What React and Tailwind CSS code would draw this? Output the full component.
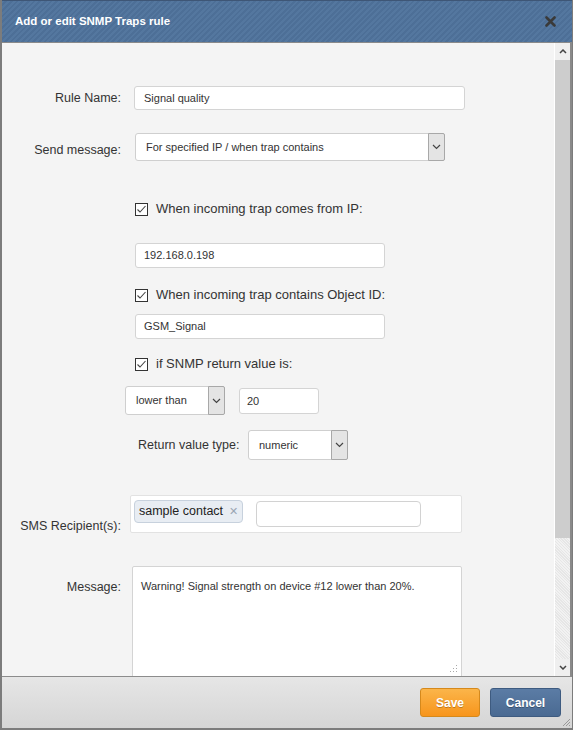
import React from "react";

const font = { fontFamily: '"Liberation Sans", Arial, Helvetica, sans-serif' };

function Chevron({ className = "" }) {
  return (
    <svg width="9" height="6" viewBox="0 0 9 6" className={className}>
      <path d="M1 1 L4.5 4.5 L8 1" fill="none" stroke="#444" strokeWidth="1.2" />
    </svg>
  );
}

function Select({ value, className }) {
  return (
    <div className={`flex bg-white border border-[#cfcfcf] rounded-[3px] ${className}`}>
      <div className="flex-1 flex items-center pl-[10px] text-[11px] text-[#333]">{value}</div>
      <div className="w-[17px] flex items-center justify-center bg-[#e4e4e4] border border-[#a8a8a8] rounded-r-[2px] -my-px -mr-px">
        <Chevron />
      </div>
    </div>
  );
}

function Check({ label, className }) {
  return (
    <div className={`flex items-center h-[16px] ml-[133px] ${className}`}>
      <div className="w-[13px] h-[13px] border border-[#333] bg-white flex items-center justify-center">
        <svg width="11" height="9" viewBox="0 0 11 9">
          <path d="M1.5 4.5 L4 7 L9.5 1" fill="none" stroke="#444" strokeWidth="1.1" />
        </svg>
      </div>
      <span className="ml-[8px] text-[13px] text-[#333]">{label}</span>
    </div>
  );
}

export default function App() {
  return (
    <div style={font} className="w-[573px] h-[730px] flex flex-col bg-[#f4f4f4] border-l-2 border-b-2 border-r border-[#7c7c7c] overflow-hidden">
      {/* Header */}
      <div className="h-[43px] shrink-0 flex items-center justify-between border-t border-[#3e5676] border-b border-b-[#8a8a8a] bg-[repeating-linear-gradient(135deg,#54779f_0px,#54779f_2px,#4d6f97_2px,#4d6f97_4px)] pl-[13px] pr-[16px]">
        <span className="text-white font-bold text-[11.5px]">Add or edit SNMP Traps rule</span>
        <svg width="11" height="11" viewBox="0 0 11 11">
          <path d="M1.5 1.5 L9.5 9.5 M9.5 1.5 L1.5 9.5" stroke="#3a3a3a" strokeWidth="2.6" strokeLinecap="round" />
        </svg>
      </div>

      {/* Body */}
      <div className="flex-1 flex min-h-0 border-r-2 border-[#8a8a8a]">
        <div className="flex-1 overflow-hidden border-r border-white">
          {/* Rule name */}
          <div className="mt-[43px] flex items-center h-[24px]">
            <div className="w-[119px] text-right text-[12.5px] text-[#333]">Rule Name:</div>
            <div className="ml-[13px] w-[331px] h-[24px] bg-white border border-[#d4d4d4] rounded-[3px] flex items-center pl-[9px] text-[11px] text-[#333]">Signal quality</div>
          </div>
          {/* Send message */}
          <div className="mt-[23px] flex items-center h-[28px]">
            <div className="w-[119px] text-right text-[12.5px] text-[#333] pt-[6px]">Send message:</div>
            <Select value="For specified IP / when trap contains" className="ml-[14px] w-[310px] h-[28px]" />
          </div>
          {/* Checkboxes and inputs */}
          <Check label="When incoming trap comes from IP:" className="mt-[40px]" />
          <div className="mt-[26px] ml-[133px] w-[250px] h-[25px] bg-white border border-[#d4d4d4] rounded-[3px] flex items-center pl-[8px] text-[11px] text-[#333]">192.168.0.198</div>
          <Check label="When incoming trap contains Object ID:" className="mt-[19px]" />
          <div className="mt-[11px] ml-[133px] w-[250px] h-[25px] bg-white border border-[#d4d4d4] rounded-[3px] flex items-center pl-[8px] text-[11px] text-[#333]">GSM_Signal</div>
          <Check label="if SNMP return value is:" className="mt-[17px]" />
          {/* lower than row */}
          <div className="mt-[14px] flex items-center h-[29px]">
            <Select value="lower than" className="ml-[123px] w-[100px] h-[29px]" />
            <div className="ml-[14px] w-[80px] h-[26px] bg-white border border-[#d4d4d4] rounded-[3px] flex items-center pl-[7px] pt-[2px] text-[11px] text-[#333]">20</div>
          </div>
          {/* Return value type */}
          <div className="mt-[15px] flex items-center h-[30px]">
            <span className="ml-[136px] text-[12.5px] text-[#333] w-[97px] whitespace-nowrap">Return value type:</span>
            <Select value="numeric" className="ml-[13px] w-[100px] h-[30px] bg-[#fbfbfb]" />
          </div>
          {/* SMS recipients */}
          <div className="mt-[35px] flex items-end">
            <div className="w-[119px] text-right text-[12.5px] text-[#333] translate-y-[3px]">SMS Recipient(s):</div>
            <div className="ml-[9px] w-[332px] h-[38px] bg-white border border-[#e2e2e2] rounded-[2px] flex items-start pt-[4px] pl-[3px]">
              <div className="h-[23px] px-[4px] flex items-center bg-[#e8edf3] border border-[#c7d1dd] rounded-[4px] text-[12.5px] text-[#222]">
                sample contact
                <span className="ml-[6px] text-[11px] text-[#9aa6b4]">✕</span>
              </div>
              <div className="ml-[13px] mt-[1px] w-[165px] h-[26px] bg-white border border-[#d2d2d2] rounded-[4px]" />
            </div>
          </div>
          {/* Message */}
          <div className="mt-[33px] flex items-start">
            <div className="w-[119px] mt-[12px] text-right text-[12.5px] text-[#333]">Message:</div>
            <div className="relative ml-[11px] w-[330px] h-[112px] bg-white border border-[#d4d4d4] rounded-[2px] pl-[8px] pt-[11px] text-[11px] text-[#333]">
              Warning! Signal strength on device #12 lower than 20%.
              <svg width="8" height="8" viewBox="0 0 8 8" className="absolute right-[3px] bottom-[4px]">
                <g fill="#aaa">
                  <rect x="6" y="0" width="1" height="1" />
                  <rect x="3" y="3" width="1" height="1" />
                  <rect x="6" y="3" width="1" height="1" />
                  <rect x="0" y="6" width="1" height="1" />
                  <rect x="3" y="6" width="1" height="1" />
                  <rect x="6" y="6" width="1" height="1" />
                </g>
              </svg>
            </div>
          </div>
        </div>
        {/* Scrollbar */}
        <div className="w-[15px] shrink-0 flex flex-col bg-[#efefef]">
          <div className="h-[17px] flex items-center justify-center">
            <svg width="8" height="5" viewBox="0 0 8 5"><path d="M1 4 L4 1 L7 4" fill="none" stroke="#444" strokeWidth="1.5" /></svg>
          </div>
          <div className="h-[478px] bg-[#cdcdcd]" />
          <div className="flex-1 bg-[repeating-linear-gradient(45deg,#f2f2f2_0px,#f2f2f2_1px,#e6e6e6_1px,#e6e6e6_2px)]" />
          <div className="h-[17px] flex items-center justify-center bg-[#efefef]">
            <svg width="8" height="5" viewBox="0 0 8 5"><path d="M1 1 L4 4 L7 1" fill="none" stroke="#444" strokeWidth="1.5" /></svg>
          </div>
        </div>
      </div>

      {/* Footer */}
      <div className="relative h-[52px] shrink-0 border-t border-[#8c8c8c] bg-[linear-gradient(#e6e6e6,#d5d5d5)] flex items-start justify-end pt-[11px] pr-[11px] gap-[10px]">
        <button className="w-[60px] h-[29px] rounded-[3px] border border-[#d5891c] bg-[linear-gradient(#fbb54a,#f7951c)] text-white font-bold text-[12px] [text-shadow:0_1px_0_rgba(0,0,0,0.25)]">Save</button>
        <button className="w-[71px] h-[29px] rounded-[3px] border border-[#3e5b80] bg-[linear-gradient(#5b7ca5,#4a6a92)] text-white font-bold text-[12px] [text-shadow:0_1px_0_rgba(0,0,0,0.3)]">Cancel</button>
        <svg width="10" height="10" viewBox="0 0 10 10" className="absolute right-[1px] bottom-[1px]">
          <path d="M9 2 L2 9 M9 5 L5 9 M9 8 L8 9" stroke="#999" strokeWidth="1" />
        </svg>
      </div>
    </div>
  );
}
